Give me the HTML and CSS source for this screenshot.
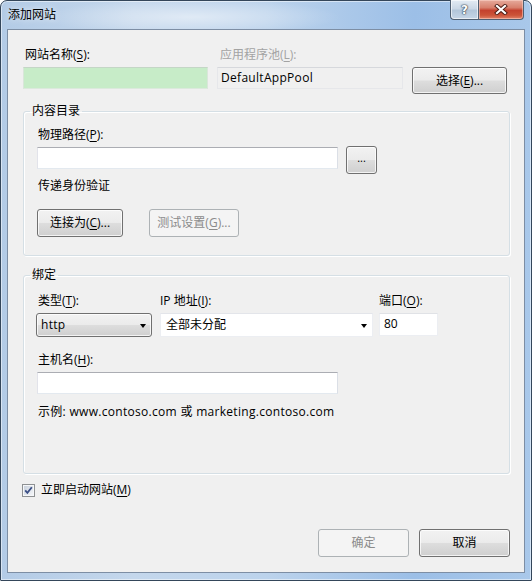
FILE: index.html
```html
<!DOCTYPE html>
<html lang="zh-CN">
<head>
<meta charset="utf-8">
<title>添加网站</title>
<link rel="stylesheet" href="styles.css">
</head>
<body>
<div class="window">
  <div class="titlebar">
    <span class="title">添加网站</span>
    <div class="caption-buttons">
      <span class="cap-btn cap-help">?</span>
      <span class="cap-btn cap-close">
        <svg width="14" height="11" viewBox="0 0 14 11">
          <path d="M3 2 L11 9 M11 2 L3 9" stroke="#4a1a12" stroke-width="4" stroke-linecap="square"/>
          <path d="M3 2 L11 9 M11 2 L3 9" stroke="#ffffff" stroke-width="2.2" stroke-linecap="square"/>
        </svg>
      </span>
    </div>
  </div>

  <div class="client">
    <div class="site-row">
      <div class="field name-field">
        <div class="label">网站名称(<u>S</u>):</div>
        <div class="textbox textbox-green"></div>
      </div>
      <div class="field pool-field">
        <div class="label label-disabled">应用程序池(<u>L</u>):</div>
        <div class="textbox textbox-readonly">DefaultAppPool</div>
      </div>
      <button class="btn btn-select">选择(<u>E</u>)...</button>
    </div>

    <fieldset class="group group-content">
      <legend>内容目录</legend>
      <div class="label">物理路径(<u>P</u>):</div>
      <div class="path-row">
        <div class="textbox path-box"></div>
        <button class="btn btn-browse">...</button>
      </div>
      <div class="label auth-label">传递身份验证</div>
      <div class="auth-row">
        <button class="btn btn-connect">连接为(<u>C</u>)...</button>
        <button class="btn btn-test" disabled>测试设置(<u>G</u>)...</button>
      </div>
    </fieldset>

    <fieldset class="group group-binding">
      <legend>绑定</legend>
      <div class="binding-row">
        <div class="field type-field">
          <div class="label">类型(<u>T</u>):</div>
          <div class="combo combo-button">
            <span class="combo-text">http</span>
            <span class="combo-arrow"></span>
          </div>
        </div>
        <div class="field ip-field">
          <div class="label">IP 地址(<u>I</u>):</div>
          <div class="combo combo-edit">
            <span class="combo-text">全部未分配</span>
            <span class="combo-arrow"></span>
          </div>
        </div>
        <div class="field port-field">
          <div class="label">端口(<u>O</u>):</div>
          <div class="textbox port-box">80</div>
        </div>
      </div>
      <div class="label host-label">主机名(<u>H</u>):</div>
      <div class="textbox host-box"></div>
      <div class="example">示例: www.contoso.com 或 marketing.contoso.com</div>
    </fieldset>

    <div class="start-row">
      <svg class="checkbox" width="13" height="13" viewBox="0 0 13 13">
        <defs>
          <linearGradient id="boxFill" x1="0" y1="0" x2="1" y2="1">
            <stop offset="0" stop-color="#c9d1dc"/>
            <stop offset="1" stop-color="#f4f6f9"/>
          </linearGradient>
        </defs>
        <rect x="0.5" y="0.5" width="12" height="12" fill="#f6f7f9" stroke="#8e9193"/>
        <rect x="2" y="2" width="9" height="9" fill="url(#boxFill)"/>
        <path d="M3.2 6.3 L5.4 8.9 L9.8 3.2" fill="none" stroke="#3b4f86" stroke-width="1.8"/>
      </svg>
      <span class="start-text">立即启动网站(<u>M</u>)</span>
    </div>

    <div class="dialog-buttons">
      <button class="btn btn-ok" disabled>确定</button>
      <button class="btn btn-cancel">取消</button>
    </div>
  </div>
</div>
</body>
</html>
```

FILE: styles.css
```css
* {
  box-sizing: border-box;
}

html, body {
  margin: 0;
  padding: 0;
  width: 532px;
  height: 581px;
  overflow: hidden;
  background: #ffffff;
}

body {
  font-family: "Open Sans", "Noto Sans CJK SC", sans-serif;
  font-size: 12px;
  line-height: 16px;
  color: #000;
}

u {
  text-decoration: underline;
  text-underline-offset: 2px;
}

/* ---- window frame ---- */
.window {
  width: 532px;
  height: 581px;
  border: 1px solid #34465a;
  border-radius: 7px 7px 1px 1px;
  display: flex;
  flex-direction: column;
  background:
    radial-gradient(ellipse 150px 18px at 190px 16px, rgba(255,255,255,0.5), rgba(255,255,255,0) 100%),
    linear-gradient(to right, #b3cbe6 0%, #c4d7ec 25%, #bcd3ec 50%, #9cbfe7 78%, #a9c8ea 100%);
  box-shadow: inset 0 0 0 1px rgba(255,255,255,0.5);
}

.titlebar {
  height: 28px;
  flex: none;
  display: flex;
  justify-content: space-between;
  align-items: flex-start;
  padding-left: 7px;
}

.title {
  padding-top: 5px;
  font-family: "Noto Sans CJK SC", sans-serif;
  font-size: 12px;
  line-height: 16px;
  color: #000;
  text-shadow: 0 0 6px rgba(255,255,255,0.9);
}

.caption-buttons {
  display: flex;
  margin-top: -1px;
  margin-right: 7px;
}

.cap-btn {
  height: 20px;
  display: flex;
  align-items: center;
  justify-content: center;
  border: 1px solid #4f5f72;
  border-top: none;
}

.cap-help {
  width: 28px;
  border-right: none;
  border-radius: 0 0 0 4px;
  background: linear-gradient(#e3ebf4 0%, #cbd8e6 45%, #b3c6da 55%, #c6d6e7 100%);
  box-shadow: inset 0 0 0 1px rgba(255,255,255,0.6);
  font-family: "DejaVu Sans", sans-serif;
  font-weight: bold;
  font-size: 12px;
  color: #ffffff;
  text-shadow: 0 0 1px #33404f, 0 0 1px #33404f, 0 0 2px #33404f;
}

.cap-close {
  width: 46px;
  border-radius: 0 0 4px 0;
  background: linear-gradient(#e6aa9c 0%, #d7806d 40%, #c4412e 55%, #cc5338 80%, #e0836a 100%);
  box-shadow: inset 0 0 0 1px rgba(255,220,210,0.5);
}

/* ---- client area ---- */
.client {
  flex: 1;
  margin: 0 6px 7px;
  border: 1px solid #7d8ea4;
  background: #f0f0f0;
  display: flex;
  flex-direction: column;
  padding: 0 14px 15px 15px;
}

.label {
  line-height: 16px;
  white-space: nowrap;
}

.label-disabled {
  color: #a3a3a3;
}

.textbox {
  height: 22px;
  background: #ffffff;
  border: 1px solid;
  border-color: #abadb3 #dbdfe6 #e3e9ef #e2e3ea;
  line-height: 20px;
  padding-left: 3px;
  white-space: nowrap;
}

.btn {
  font-family: "Open Sans", "Noto Sans CJK SC", sans-serif;
  font-size: 12px;
  line-height: 16px;
  color: #000;
  padding: 0;
  border: 1px solid #707070;
  border-radius: 3px;
  background: linear-gradient(#f2f2f2 0%, #ebebeb 48%, #dddddd 52%, #cfcfcf 100%);
  box-shadow: inset 0 0 0 1px rgba(255,255,255,0.75);
  height: 28px;
}

.btn:disabled {
  border-color: #adb2b5;
  background: #f4f4f4;
  color: #8b8b8b;
  box-shadow: none;
}

/* first row: site name, pool, select */
.site-row {
  display: flex;
  align-items: flex-start;
  padding-top: 17px;
}

.field .textbox,
.field .combo {
  margin-top: 4px;
}

.name-field {
  width: 185px;
}

.name-field .label {
  padding-left: 2px;
}

.textbox-green {
  background: #c7ecc8;
  border-color: #c4d6c6 #d9e6da #dce9dd #d9e6da;
}

.pool-field {
  width: 186px;
  margin-left: 9px;
}

.pool-field .label {
  padding-left: 3px;
}

.textbox-readonly {
  background: #f0f0f0;
  border-color: #d6d8dc #e6e7ea #e6e7ea #e6e7ea;
  padding-left: 3px;
  letter-spacing: 0.3px;
}

.btn-select {
  width: 95px;
  height: 27px;
  margin-left: 9px;
  margin-top: 20px;
}

/* group boxes */
.group {
  margin: 0;
  padding: 0 0 0 13px;
  border: 1px solid #d5dfe5;
  border-radius: 3px;
  box-shadow: inset 1px 1px 0 #ffffff, 1px 1px 0 #ffffff;
  min-width: 0;
}

.group legend {
  margin-left: -7px;
  padding: 0 2px;
  line-height: 16px;
}

.group-content {
  margin-top: 9px;
  padding-top: 8px;
  padding-bottom: 18px;
}

.group-content > .label {
  padding-left: 1px;
}

.path-row {
  display: flex;
  align-items: flex-start;
  margin-top: 3px;
}

.path-box {
  width: 301px;
  margin-top: 1px;
}

.btn-browse {
  width: 31px;
  margin-left: 8px;
  font-size: 11px;
  line-height: 10px;
  padding-bottom: 4px;
}

.auth-label {
  margin-top: 4px;
}

.auth-row {
  display: flex;
  margin-top: 15px;
}

.btn-connect {
  width: 86px;
}

.btn-test {
  width: 90px;
  margin-left: 26px;
}

.group-binding {
  margin-top: 11px;
  padding-top: 10px;
  padding-bottom: 53px;
}

.binding-row {
  display: flex;
  align-items: flex-start;
}

.type-field {
  width: 116px;
  margin-left: -1px;
}

.type-field .label {
  padding-left: 2px;
}

.ip-field {
  width: 213px;
  margin-left: 8px;
}

.port-field {
  width: 59px;
  margin-left: 6px;
}

.combo {
  height: 24px;
  display: flex;
  align-items: center;
  justify-content: space-between;
  padding: 0 5px 0 4px;
  white-space: nowrap;
}

.combo-button {
  border: 1px solid #707070;
  border-radius: 3px;
  background: linear-gradient(#f2f2f2 0%, #ebebeb 48%, #dddddd 52%, #cfcfcf 100%);
  box-shadow: inset 0 0 0 1px rgba(255,255,255,0.75);
  letter-spacing: 0.3px;
}

.combo-edit {
  background: #ffffff;
  border: 1px solid;
  border-color: #e3e5ea #eceef2 #eceef2 #eceef2;
  padding-left: 5px;
}

.combo-arrow {
  width: 0;
  height: 0;
  border-left: 3.5px solid transparent;
  border-right: 3.5px solid transparent;
  border-top: 4px solid #000;
  margin-top: 1px;
}

.port-box {
  height: 23px;
  padding-left: 4px;
  border-color: #e0e2e6 #eceef2 #eceef2 #eceef2;
  line-height: 20px;
}

.host-label {
  margin-top: 15px;
  padding-left: 1px;
}

.host-box {
  width: 301px;
  margin-top: 4px;
}

.example {
  margin-top: 10px;
  padding-left: 1px;
  white-space: nowrap;
  letter-spacing: 0.3px;
}

/* start checkbox */
.start-row {
  display: flex;
  align-items: center;
  height: 16px;
  margin-top: 8px;
}

.checkbox {
  margin-left: -1px;
  flex: none;
}

.start-text {
  margin-left: 6px;
}

/* OK / Cancel */
.dialog-buttons {
  margin-top: auto;
  display: flex;
  justify-content: flex-end;
  gap: 10px;
}

.btn-ok,
.btn-cancel {
  width: 91px;
}
```
